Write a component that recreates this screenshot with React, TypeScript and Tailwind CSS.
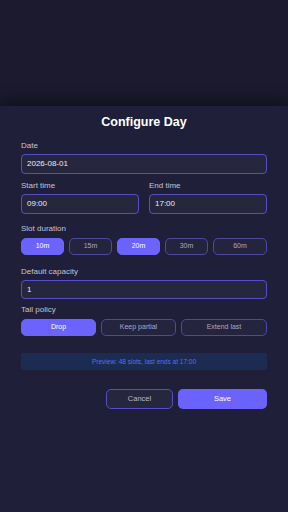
const slots = ["10m", "15m", "20m", "30m", "60m"];
const activeSlots = ["10m", "20m"];
const policies = ["Drop", "Keep partial", "Extend last"];

function Label({ children, className = "" }: { children: React.ReactNode; className?: string }) {
  return (
    <div className={`h-[12px] text-[8px] leading-[12px] text-[#c4c3d6] ${className}`}>
      {children}
    </div>
  );
}

function Field({ value, className = "" }: { value: string; className?: string }) {
  return (
    <div
      className={`flex items-center rounded-[4px] border border-[#574dc4] bg-[#27263f] px-[5px] text-[8px] text-[#ececf4] ${className}`}
    >
      {value}
    </div>
  );
}

function Chip({ label, active, className = "" }: { label: string; active: boolean; className?: string }) {
  return (
    <button
      className={`flex items-center justify-center rounded-[5px] border text-[7px] ${
        active
          ? "border-[#6c63ff] bg-[#6c63ff] text-white"
          : "border-[#4f47a8] bg-[#25243e] text-[#a9a8c2]"
      } ${className}`}
    >
      {label}
    </button>
  );
}

export default function App() {
  return (
    <div
      className="flex h-[512px] w-[288px] flex-col overflow-hidden bg-[#1b1a2e]"
      style={{ fontFamily: '"Liberation Sans", Arial, sans-serif' }}
    >
      <div className="h-[106px] shrink-0" />
      <div className="flex-1 bg-[#1f1f3a] px-[21px] pt-[8px] shadow-[0_-6px_14px_rgba(0,0,0,0.35)]">
        <h2 className="text-center text-[12.5px] font-bold leading-[16px] text-white">Configure Day</h2>

        <Label className="mt-[10px]">Date</Label>
        <Field value="2026-08-01" className="mt-[2px] h-[20px]" />

        <div className="mt-[6px] flex gap-[10px]">
          <div className="flex-1">
            <Label>Start time</Label>
            <Field value="09:00" className="mt-[2px] h-[20px]" />
          </div>
          <div className="flex-1">
            <Label>End time</Label>
            <Field value="17:00" className="mt-[2px] h-[20px]" />
          </div>
        </div>

        <Label className="mt-[9px]">Slot duration</Label>
        <div className="mt-[3px] flex gap-[5px]">
          {slots.map((s) => (
            <Chip
              key={s}
              label={s}
              active={activeSlots.includes(s)}
              className={`h-[17px] ${s === "60m" ? "flex-1" : "w-[43px]"}`}
            />
          ))}
        </div>

        <Label className="mt-[11px]">Default capacity</Label>
        <Field value="1" className="mt-[2px] h-[19px]" />

        <Label className="mt-[5px]">Tail policy</Label>
        <div className="mt-[3px] flex gap-[5px]">
          {policies.map((p, i) => (
            <Chip
              key={p}
              label={p}
              active={i === 0}
              className={`h-[17px] ${i === 2 ? "flex-1" : "w-[75px]"}`}
            />
          ))}
        </div>

        <div className="mt-[17px] flex h-[17px] items-center justify-center rounded-[2px] bg-[#1b2b52] text-[6.5px] text-[#5c70e0]">
          Preview: 48 slots, last ends at 17:00
        </div>

        <div className="mt-[19px] flex justify-end gap-[5px]">
          <button className="h-[20px] w-[67px] rounded-[5px] border border-[#574dc4] bg-[#27263f] text-[7.5px] text-[#b9b8cc]">
            Cancel
          </button>
          <button className="h-[20px] w-[89px] rounded-[5px] bg-[#6c63ff] text-[7.5px] text-white">
            Save
          </button>
        </div>
      </div>
    </div>
  );
}
